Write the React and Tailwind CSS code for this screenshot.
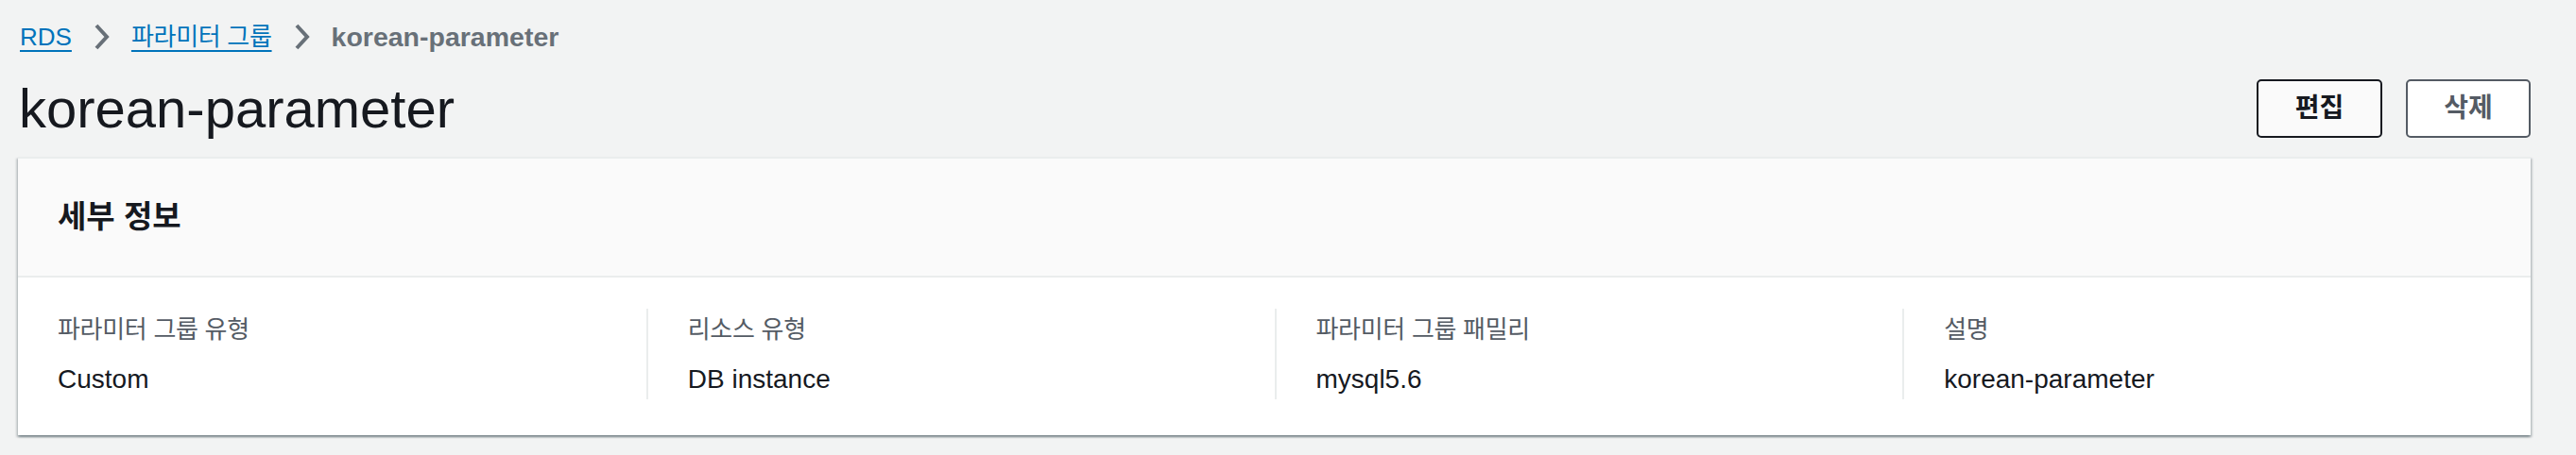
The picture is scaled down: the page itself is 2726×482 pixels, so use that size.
import React from 'react';

// breadcrumb separator chevron
const Chevron = () => (
  <svg width="17" height="28" viewBox="0 0 17 28" className="shrink-0">
    <polyline points="3,2 14,14 3,26" fill="none" stroke="#687078" strokeWidth="4" />
  </svg>
);

const details = [
  { label: '파라미터 그룹 유형', value: 'Custom' },
  { label: '리소스 유형', value: 'DB instance' },
  { label: '파라미터 그룹 패밀리', value: 'mysql5.6' },
  { label: '설명', value: 'korean-parameter' },
];

export default function App() {
  return (
    <main className="min-h-screen w-full bg-[#f2f3f3] text-[#16191f] font-['Liberation_Sans','Noto_Sans_CJK_KR',sans-serif] pl-[19px] pr-[48px] pt-[19px]">
      {/* breadcrumbs */}
      <nav className="flex items-center gap-[23px] h-[40px] pl-[2px] text-[28px] leading-[40px]">
        <a href="#" className="text-[#0073bb] text-[26px] underline decoration-2 underline-offset-[5px]">RDS</a>
        <Chevron />
        <a href="#" className="text-[#0073bb] underline decoration-2 underline-offset-[5px] text-[26px] tracking-[-0.3px]">파라미터 그룹</a>
        <Chevron />
        <span className="font-bold text-[#687078] text-[28.5px]">korean-parameter</span>
      </nav>

      {/* page header */}
      <div className="flex items-center justify-between mt-[24px]">
        <h1 className="text-[58px] leading-[64px] font-normal pl-[1px]">korean-parameter</h1>
        <div className="flex items-center gap-[25px]">
          <button className="w-[133px] h-[62px] rounded-[5px] border-2 border-[#16191f] bg-[#fafafa] text-[#16191f] text-[28px] font-bold">
            편집
          </button>
          <button className="w-[132px] h-[62px] rounded-[5px] border-2 border-[#545b64] bg-white text-[#545b64] text-[28px] font-bold">
            삭제
          </button>
        </div>
      </div>

      {/* details container */}
      <section className="mt-[19px] bg-white border-t-2 border-[#eaeded] shadow-[0_2px_2px_0_rgba(0,28,36,0.3),2px_2px_2px_0_rgba(0,28,36,0.15),-2px_2px_2px_0_rgba(0,28,36,0.15)]">
        <div className="h-[126px] flex items-center px-[42px] bg-[#fafafa] border-b-2 border-[#eaeded]">
          <h2 className="text-[33px] font-bold">세부 정보</h2>
        </div>
        <div className="grid grid-cols-4 pt-[33px] pb-[38px]">
          {details.map((d, i) => (
            <div key={d.label} className={`pl-[42px] ${i > 0 ? 'border-l-2 border-[#eaeded]' : ''}`}>
              <div className="text-[26px] leading-[44px] tracking-[-0.3px] text-[#545b64]">{d.label}</div>
              <div className="mt-[10px] text-[28px] leading-[42px]">{d.value}</div>
            </div>
          ))}
        </div>
      </section>
    </main>
  );
}
